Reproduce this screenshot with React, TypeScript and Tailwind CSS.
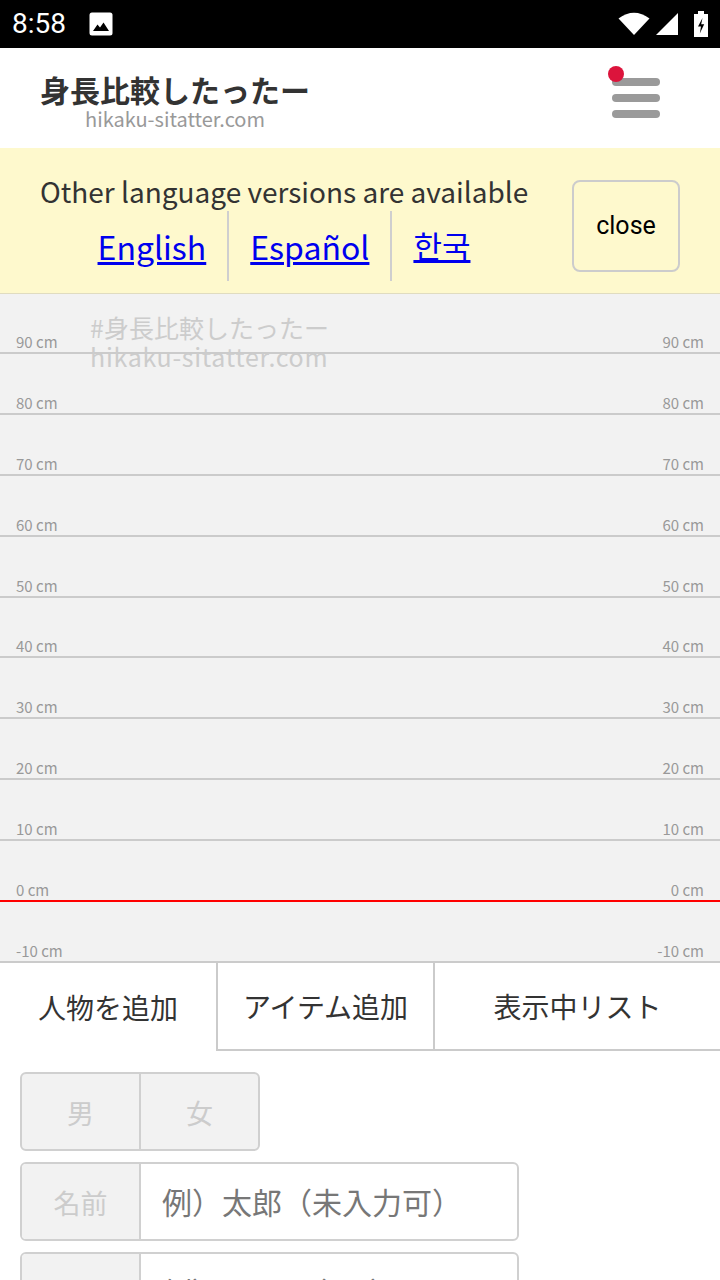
import React from "react";

const labels = [90, 80, 70, 60, 50, 40, 30, 20, 10, 0, -10];

function StatusBar() {
  return (
    <div className="flex h-[48px] items-center bg-black px-[12px] text-white">
      <span className="text-[28px] leading-none" style={{ fontFamily: "Roboto, sans-serif" }}>8:58</span>
      <svg className="ml-[23px]" width="24" height="24" viewBox="0 0 24 24">
        <rect x="0.5" y="0.5" width="23" height="23" rx="2.5" fill="#fff" />
        <path d="M4 19 L8.5 12.5 L11 15.5 L14.5 10.5 L20 19 Z" fill="#000" />
      </svg>
      <div className="ml-auto flex items-center gap-[6px]">
        <svg width="32" height="24" viewBox="0 0 32 24">
          <path d="M16 23 L0.5 6.5 Q16 -5 31.5 6.5 Z" fill="#fff" />
        </svg>
        <svg width="22" height="22" viewBox="0 0 22 22">
          <path d="M22 0 L22 22 L0 22 Z" fill="#fff" />
        </svg>
        <svg className="ml-[10px]" width="14" height="26" viewBox="0 0 14 26">
          <rect x="4" y="0" width="6" height="3" fill="#fff" />
          <rect x="0" y="3" width="14" height="23" fill="#fff" />
          <path d="M8.5 7 L4 15.5 L7 15.5 L5.8 22.5 L10.2 13.2 L7.2 13.2 Z" fill="#000" />
        </svg>
      </div>
    </div>
  );
}

export default function App() {
  return (
    <div className="w-[720px] h-[1280px] overflow-hidden bg-white" style={{ fontFamily: '"Noto Sans CJK JP", "Noto Sans", sans-serif' }}>
      <StatusBar />
      {/* Header */}
      <div className="relative flex h-[100px] items-start bg-white pl-[40px] pt-[22px]">
        <div className="flex flex-col items-center">
          <div className="text-[30px] font-bold leading-[38px] text-[#333]">身長比較したったー</div>
          <div className="text-[20px] leading-[22px] text-[#999]">hikaku-sitatter.com</div>
        </div>
        <div className="relative ml-auto mr-[60px] mt-[8px] flex w-[48px] flex-col gap-[8.5px]">
          <div className="h-[7.5px] w-[48px] rounded-full bg-[#9a9a9a]" />
          <div className="h-[7.5px] w-[48px] rounded-full bg-[#9a9a9a]" />
          <div className="h-[7.5px] w-[48px] rounded-full bg-[#9a9a9a]" />
          <div className="absolute left-[-4px] top-[-12px] h-[16px] w-[16px] rounded-full bg-[#dc143c]" />
        </div>
      </div>
      {/* Language banner */}
      <div className="flex h-[146px] items-center border-b border-[#e0dcc0] bg-[#fef9cd] pl-[40px] pr-[40px] pt-[10px]">
        <div className="flex w-[488px] flex-col items-center">
          <div className="w-full whitespace-nowrap text-[28px] leading-[40px] text-[#333]">Other language versions are available</div>
          <div className="flex h-[70px] items-stretch">
            <a href="#" className="flex items-center px-[21px] text-[32px] text-[#0000ee] underline">English</a>
            <a href="#" className="flex items-center border-l-2 border-[#cfcfcf] px-[21px] text-[32px] text-[#0000ee] underline">Español</a>
            <a href="#" className="flex items-center border-l-2 border-[#cfcfcf] px-[21px] text-[31px] text-[#0000ee] underline" style={{ fontFamily: '"Noto Sans CJK KR", sans-serif' }}>한국</a>
          </div>
        </div>
        <button className="ml-auto flex h-[92px] w-[108px] items-center justify-center rounded-[8px] border-2 border-[#cccccc] text-[25px] text-black" style={{ fontFamily: "Roboto, sans-serif" }}>
          close
        </button>
      </div>
      {/* Chart */}
      <div className="relative bg-[#f2f2f2]">
        <div className="absolute left-[90px] top-[19px] text-[25px] leading-[29px] text-[#cccccc]">
          <div>#身長比較したったー</div>
          <div className="tracking-[0.7px]">hikaku-sitatter.com</div>
        </div>
        {labels.map((v, i) => (
          <div
            key={v}
            className={
              (i === 0 ? "h-[60px] " : "h-[60.9px] ") +
              (v === 0 ? "border-[#ff0000] " : "border-[#cbcbcb] ") +
              "flex items-end justify-between border-b-2 px-[16px] pb-[1px] text-[15px] leading-[18px] text-[#999]"
            }
          >
            <span>{v} cm</span>
            <span>{v} cm</span>
          </div>
        ))}
      </div>
      {/* Tabs */}
      <div className="flex h-[88px] text-[28px] text-[#333]">
        <div className="flex w-[216px] items-center justify-center bg-white">人物を追加</div>
        <div className="flex w-[217px] items-center justify-center border-b-2 border-l-2 border-[#cbcbcb]">アイテム追加</div>
        <div className="flex w-[287px] items-center justify-center border-b-2 border-l-2 border-[#cbcbcb]">表示中リスト</div>
      </div>
      {/* Form */}
      <div className="flex flex-col gap-[11px] pl-[20px] pt-[21px]">
        <div className="flex h-[79px] w-[240px] overflow-hidden rounded-[6px] border-2 border-[#d0d0d0] bg-[#f2f2f2] text-[27px] text-[#cccccc]">
          <div className="flex w-[119px] items-center justify-center border-r-2 border-[#d0d0d0] pt-[3px]">男</div>
          <div className="flex flex-1 items-center justify-center pt-[3px]">女</div>
        </div>
        <div className="flex h-[79px] w-[499px] overflow-hidden rounded-[6px] border-2 border-[#d0d0d0] bg-white">
          <div className="flex w-[119px] items-center justify-center border-r-2 border-[#d0d0d0] bg-[#f2f2f2] pt-[4px] text-[27px] text-[#cccccc]">名前</div>
          <div className="flex flex-1 items-center pl-[21px] text-[30px] text-[#777]">例）太郎（未入力可）</div>
        </div>
        <div className="flex h-[79px] w-[499px] overflow-hidden rounded-[6px] border-2 border-[#d0d0d0] bg-white">
          <div className="flex w-[119px] items-start justify-center border-r-2 border-[#d0d0d0] bg-[#f2f2f2] pt-[30px] text-[27px] text-[#cccccc]">身長</div>
          <div className="flex flex-1 items-center pl-[21px] text-[30px] text-[#777]">例）170.5（cm）</div>
        </div>
      </div>
    </div>
  );
}
